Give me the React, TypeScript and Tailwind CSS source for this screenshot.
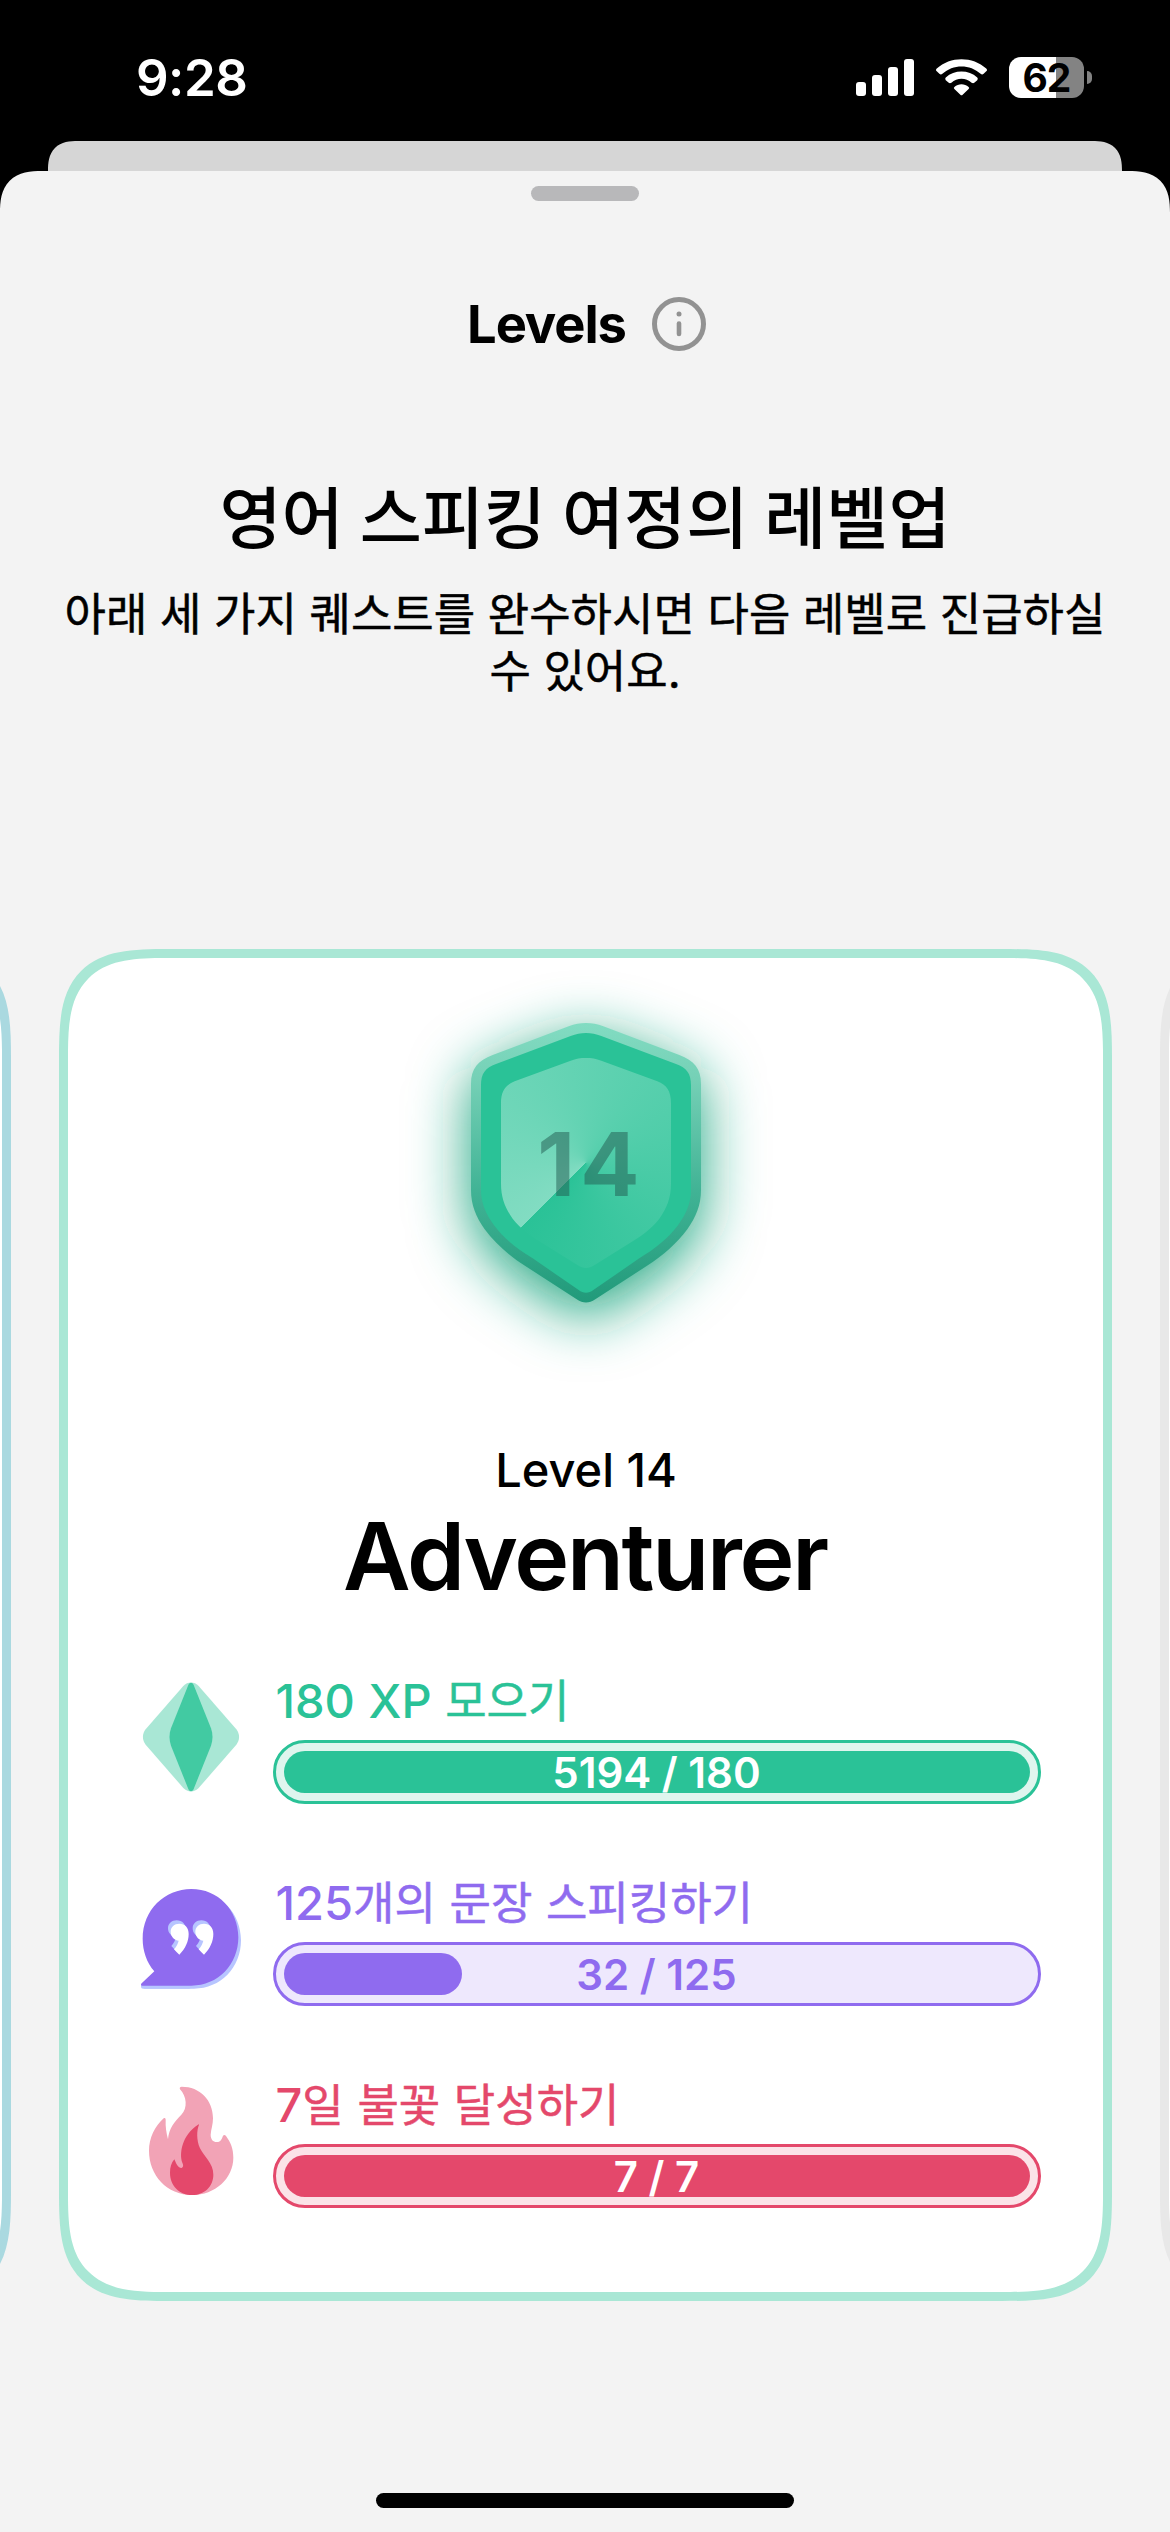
import type { ReactNode } from "react";

const RIM =
  "M558 189 C576 189 592 192 610 199 L838 285 C882 302 903 325 903 372 L903 690 C903 735 888 770 862 808 C830 850 790 887 740 918 L586 1018 C566 1031 550 1031 530 1018 L376 918 C326 887 286 850 254 808 C228 770 213 735 213 690 L213 372 C213 325 234 302 278 285 L506 199 C524 192 540 189 558 189 Z";
const FACE =
  "M558 219 C574 219 588 222 604 228 L828 312 C860 324 873 340 873 376 L873 690 C873 730 858 762 834 796 C804 836 766 866 718 895 L580 990 C566 1001 550 1001 536 990 L398 895 C350 866 312 836 282 796 C258 762 243 730 243 690 L243 376 C243 340 256 324 288 312 L512 228 C528 222 542 219 558 219 Z";
const GLASS =
  "M558 293 C574 293 588 296 604 302 L772 364 C800 375 813 393 813 430 L813 670 C813 715 800 745 778 776 C754 807 722 830 686 851 L584 915 C566 927 550 927 532 915 L430 851 C394 830 362 807 338 776 C316 745 303 715 303 670 L303 430 C303 393 316 375 344 364 L512 302 C528 296 542 293 558 293 Z";

function Shield() {
  return (
    <svg viewBox="0 0 1110 1260" className="h-[420px] w-[370px] overflow-visible">
      <defs>
        <linearGradient id="rim" x1="0" y1="0" x2="0" y2="1">
          <stop offset="0" stopColor="#82dcc2" />
          <stop offset="0.2" stopColor="#75d0b6" />
          <stop offset="0.6" stopColor="#41b395" />
          <stop offset="1" stopColor="#219a7a" />
        </linearGradient>
        <filter id="glow" x="-60%" y="-60%" width="220%" height="220%">
          <feGaussianBlur stdDeviation="90" />
        </filter>
        <clipPath id="glass">
          <path d={GLASS} />
        </clipPath>
      </defs>
      <path d={RIM} fill="#1fa57f" filter="url(#glow)" transform="translate(0 44)" />
      <path d={RIM} fill="url(#rim)" />
      <path d={FACE} fill="#2ac297" />
      <g clipPath="url(#glass)">
        <foreignObject x="303" y="293" width="510" height="631">
          <div className="h-[631px] w-[510px] bg-[conic-gradient(from_225deg_at_50%_50%,#82dcc2_0deg,#2ac297_360deg)]" />
        </foreignObject>
      </g>
      <text
        x="573"
        y="707"
        textAnchor="middle"
        className="fill-[#215a50]/50 font-['Inter'] text-[263px] font-bold tracking-[16px]"
      >
        14
      </text>
    </svg>
  );
}

function Gem() {
  return (
    <svg viewBox="63 96 300 330" className="h-[110px] w-[100px]">
      <path
        d="M190 108 C203 94 223 94 236 108 L349 238 C360 252 360 270 349 284 L236 414 C223 428 203 428 190 414 L77 284 C66 270 66 252 77 238 Z"
        fill="#a9e7d5"
      />
      <path
        d="M205 105 C209 96 217 96 221 105 L273 235 C279 252 279 270 273 287 L221 417 C217 426 209 426 205 417 L153 287 C147 270 147 252 153 235 Z"
        fill="#42caa2"
      />
    </svg>
  );
}

function Bubble() {
  const body =
    "M214 87 C294 87 355 150 355 232 C355 314 294 377 214 377 L66 377 C62 377 62 373 65 370 L103 334 C80 308 68 272 68 236 C68 150 134 87 214 87 Z";
  const quote =
    "M178 191 C195 191 206 203 206 222 C206 244 196 266 178 284 C172 279 167 274 162 268 C170 259 174 250 176 242 C163 240 152 230 152 215 C152 201 163 191 178 191 Z";
  return (
    <svg viewBox="63 72 300 330" className="h-[110px] w-[100px]">
      <path d={body} fill="#b7c5ff" transform="translate(8 9)" />
      <rect x="63" y="372" width="150" height="14" rx="6" fill="#b7c5ff" />
      <path d={body} fill="#8f6bef" />
      <path d={quote} fill="#b7c5ff" transform="translate(-8 -10)" />
      <path d={quote} fill="#fff" />
      <path d={quote} fill="#b7c5ff" transform="translate(66 -10)" />
      <path d={quote} fill="#fff" transform="translate(74 0)" />
    </svg>
  );
}

function Flame() {
  return (
    <svg viewBox="63 78 300 330" className="h-[110px] w-[100px]">
      <path
        d="M185 80 C240 80 279 120 279 175 C279 195 273 208 272 224 C272 238 279 246 290 246 C304 246 306 234 309 227 C312 224 315 224 318 228 C332 247 340 266 340 293 C340 355 285 405 217 405 C140 405 87 345 87 272 C87 235 104 199 131 175 C135 173 137 175 137 180 C136 200 139 218 144 238 C147 206 162 186 184 164 C204 145 200 108 180 88 C178 84 180 80 185 80 Z"
        fill="#f2a3b6"
      />
      <path
        d="M237 194 C230 210 229 240 240 265 C252 290 280 310 280 344 C280 380 252 405 217 405 C178 405 150 377 150 338 C150 322 154 308 163 298 C168 308 172 324 185 324 C191 321 190 314 187 308 C177 280 186 225 234 194 C236 192 238 192 237 194 Z"
        fill="#e4486b"
      />
    </svg>
  );
}

type QuestProps = {
  icon: ReactNode;
  amount: string;
  label: string;
  value: string;
  text: string;
  track: string;
  fill: string;
  count: string;
};

const quests: QuestProps[] = [
  {
    icon: <Gem />,
    amount: "180 XP",
    label: " 모으기",
    value: "5194 / 180",
    text: "text-[#2ac297]",
    track: "border-[#2ac297] bg-[#dff5ee]",
    fill: "w-full bg-[#2ac297]",
    count: "text-white",
  },
  {
    icon: <Bubble />,
    amount: "125",
    label: "개의 문장 스피킹하기",
    value: "32 / 125",
    text: "text-[#8f6bef]",
    track: "border-[#8f6bef] bg-[#eee8fd]",
    fill: "w-[178px] bg-[#8f6bef]",
    count: "text-[#8f6bef]",
  },
  {
    icon: <Flame />,
    amount: "7",
    label: "일 불꽃 달성하기",
    value: "7 / 7",
    text: "text-[#e4486b]",
    track: "border-[#e4486b] bg-[#fbe3e8]",
    fill: "w-full bg-[#e4486b]",
    count: "text-white",
  },
];

function Quest({ icon, amount, label, value, text, track, fill, count }: QuestProps) {
  return (
    <li className="flex h-[122px] items-start gap-8">
      <div className="w-[100px] shrink-0">{icon}</div>
      <div className="w-[768px]">
        <div
          className={`h-[58px] pl-[3px] text-[47px] leading-[38px] font-medium whitespace-pre [word-spacing:1px] ${text}`}
        >
          {amount}
          <span className="text-[45px] font-normal [-webkit-text-stroke:0.5px]">{label}</span>
        </div>
        <div className={`relative h-16 rounded-full border-3 p-2 ${track}`}>
          <div className={`h-[42px] rounded-full ${fill}`} />
          <div className={`absolute inset-0 flex items-center justify-center text-[42px] font-semibold ${count}`}>
            {value}
          </div>
        </div>
      </div>
    </li>
  );
}

function StatusBar() {
  return (
    <header className="flex h-[141px] shrink-0 items-start justify-between pr-[78px] pl-[136px] text-white">
      <div className="mt-[50px] text-[51px] leading-[56px] font-semibold tracking-[-0.5px]">9:28</div>
      <div className="mt-[57px] flex h-[41px] items-center">
        <div className="flex h-[37px] items-end gap-1.5">
          <span className="h-3.5 w-2.5 rounded-[3px] bg-white" />
          <span className="h-[21px] w-2.5 rounded-[3px] bg-white" />
          <span className="h-[29px] w-2.5 rounded-[3px] bg-white" />
          <span className="h-[37px] w-2.5 rounded-[3px] bg-white" />
        </div>
        <svg
          viewBox="941 177 136 112"
          preserveAspectRatio="none"
          className="ml-[22px] h-[37px] w-[51px]"
          fill="#fff"
        >
          <path d="M943 206 C979 168 1039 168 1075 206 Q1079 210 1075 214 L1068 222 Q1064 226 1060 222 C1032 192 986 192 958 222 Q954 226 950 222 L943 214 Q939 210 943 206 Z" />
          <path d="M967 233 C990 209 1028 209 1051 233 Q1054 237 1051 241 L1043 249 Q1040 252 1036 249 C1021 233 997 233 982 249 Q978 252 975 249 L967 241 Q964 237 967 233 Z" />
          <path d="M990 262 C1001 251 1017 251 1028 262 Q1031 265 1028 268 L1012 285 Q1009 289 1006 285 L990 268 Q987 265 990 262 Z" />
        </svg>
        <div className="ml-[22px] flex h-[41px] w-[75px] items-center justify-center rounded-[12px] bg-[linear-gradient(to_right,#fff_47px,#838383_47px)]">
          <span className="text-[39px] leading-[41px] font-bold tracking-[-1px] text-black">62</span>
        </div>
        <span className="ml-[3px] h-[13px] w-[5px] rounded-r-full bg-[#838383]" />
      </div>
    </header>
  );
}

export default function App() {
  return (
    <div className="flex h-[2532px] w-[1170px] flex-col overflow-hidden bg-black font-['Inter','Noto_Sans_CJK_KR',sans-serif] text-black">
      <StatusBar />
      <div className="mx-12 h-[30px] shrink-0 rounded-t-[40px] bg-[#d6d6d6] [corner-shape:superellipse(1.4)]" />
      <main className="flex flex-1 flex-col items-center rounded-t-[42px] bg-[#f3f3f3] [corner-shape:superellipse(1.4)]">
        <div className="mt-[15px] h-[15px] w-[108px] rounded-full bg-[#b8b8ba]" />

        <div className="mt-[95px] flex h-[56px] items-center gap-[26px] pl-[3px]">
          <h1 className="text-[52.5px] leading-none font-bold tracking-[-1.1px]">Levels</h1>
          <svg viewBox="0 0 54 54" className="size-[54px]" fill="none" stroke="#929292">
            <circle cx="27" cy="27" r="24.5" strokeWidth="5" />
            <circle cx="27" cy="17" r="2.5" fill="#929292" stroke="none" />
            <path d="M27 26.500V37" strokeWidth="4.600" strokeLinecap="round" />
          </svg>
        </div>

        <h2 className="mt-[117px] h-[100px] text-[67.5px] leading-[100px] font-medium whitespace-nowrap [word-spacing:-2px]">
          영어 스피킹 여정의 레벨업
        </h2>
        <p className="mt-[17px] h-[114px] text-center text-[45px] leading-[57px] font-normal whitespace-nowrap [-webkit-text-stroke:0.5px]">
          아래 세 가지 퀘스트를 완수하시면 다음 레벨로 진급하실
          <br />수 있어요.
        </p>

        <section className="mt-[249px] flex w-full justify-center gap-12 overflow-hidden">
          <div className="h-[1352px] w-[1053px] shrink-0 rounded-[110px] border-9 border-[#aad9e0] bg-white [corner-shape:superellipse(1.63)]" />
          <article className="flex h-[1352px] w-[1053px] shrink-0 flex-col items-center rounded-[110px] border-9 border-[#a9e7d5] bg-white [corner-shape:superellipse(1.63)]">
            <div className="mt-0.5 h-[420px]">
              <Shield />
            </div>
            <p className="mt-[61px] pl-0.5 text-[47px] leading-[58px] font-medium">Level 14</p>
            <h3 className="mt-px text-[93px] leading-[112px] font-semibold tracking-[-0.024em]">Adventurer</h3>
            <ul className="mt-[70px] flex w-full flex-col gap-20 pl-[73px]">
              {quests.map((q) => (
                <Quest key={q.value} {...q} />
              ))}
            </ul>
          </article>
          <div className="h-[1352px] w-[1053px] shrink-0 rounded-[110px] border-9 border-[#e8e8e8] bg-white [corner-shape:superellipse(1.63)]" />
        </section>

        <div className="mt-auto mb-6 h-[15px] w-[418px] rounded-full bg-black" />
      </main>
    </div>
  );
}
